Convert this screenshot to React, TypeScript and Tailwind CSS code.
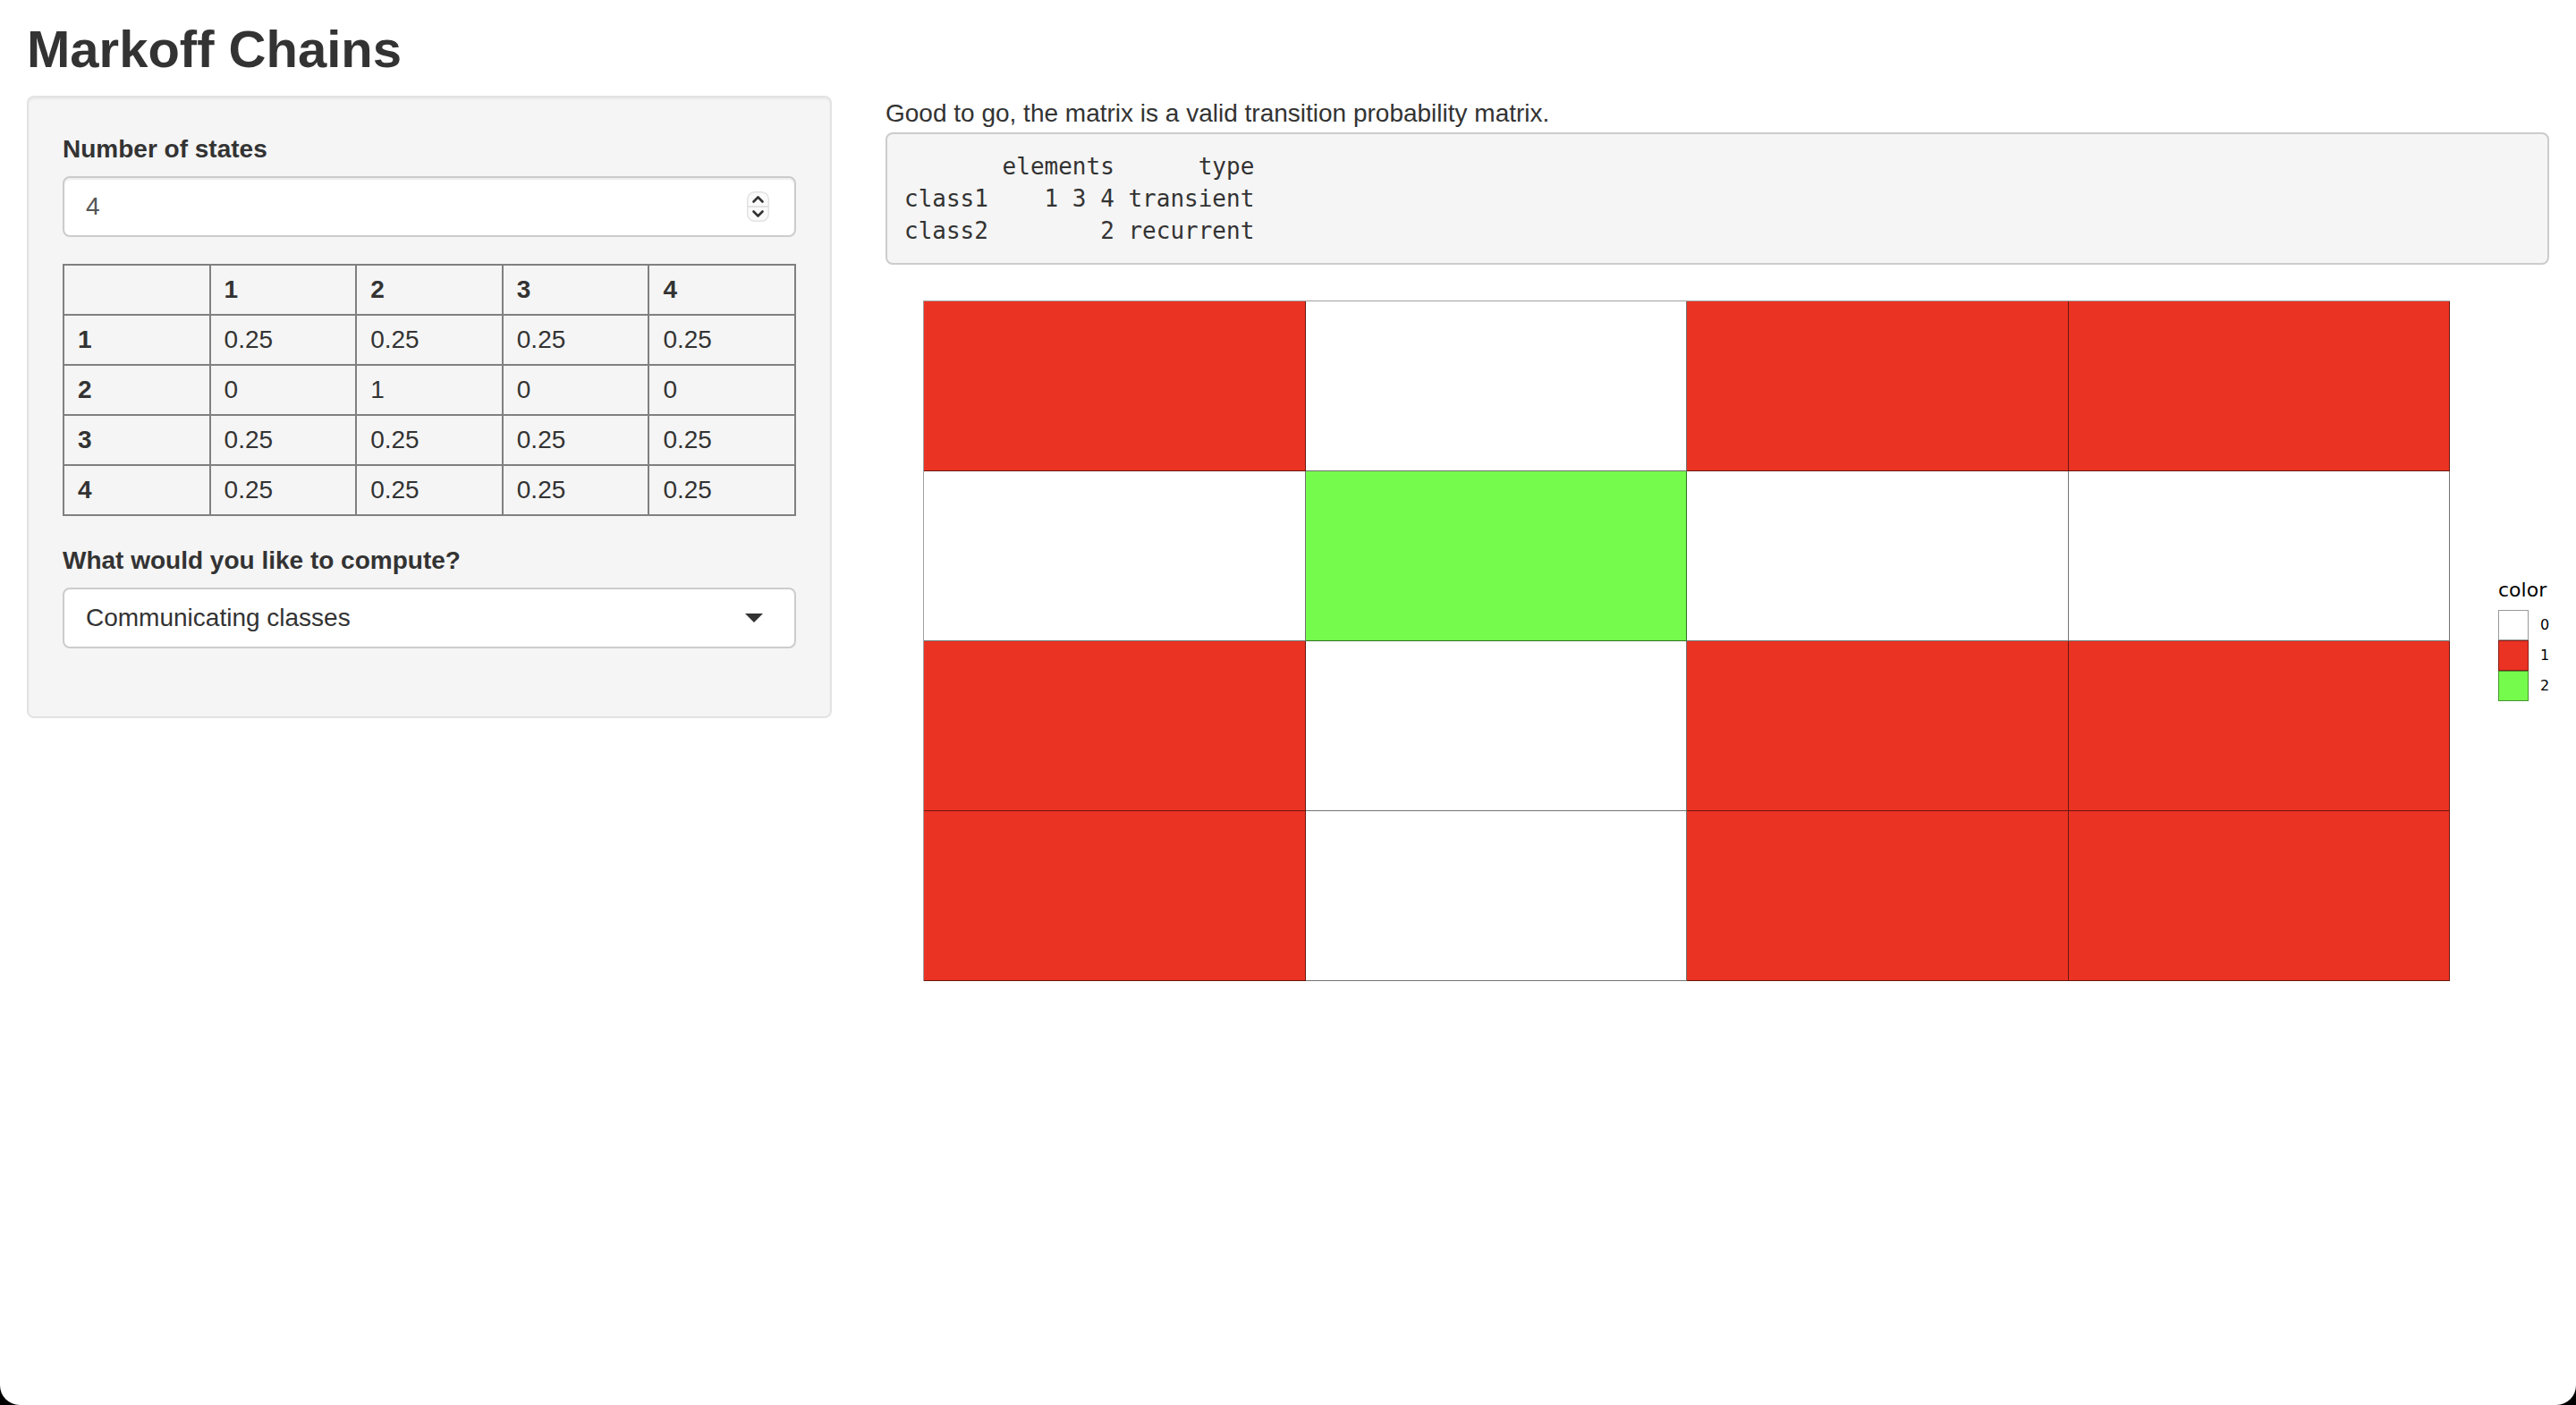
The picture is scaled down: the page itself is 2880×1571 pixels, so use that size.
const SANS = "font-['Liberation_Sans',Arial,sans-serif]";

const matrix = [
  ["0.25", "0.25", "0.25", "0.25"],
  ["0", "1", "0", "0"],
  ["0.25", "0.25", "0.25", "0.25"],
  ["0.25", "0.25", "0.25", "0.25"],
];

// 0 = white, 1 = red, 2 = green
const tiles = [
  [1, 0, 1, 1],
  [0, 2, 0, 0],
  [1, 0, 1, 1],
  [1, 0, 1, 1],
];

const tileColor = ["bg-white", "bg-[#ea3323]", "bg-[#75fb4c]"];

function Spinner() {
  return (
    <svg width="25" height="34" viewBox="0 0 25 34" className="shrink-0">
      <rect x="0.75" y="0.75" width="23.5" height="32.5" rx="8" fill="#fafafa" stroke="#e2e2e2" strokeWidth="1.5" />
      <line x1="1" y1="17" x2="24" y2="17" stroke="#dcdcdc" strokeWidth="1.5" />
      <path d="M7.5 11.5 L12.5 6.5 L17.5 11.5" fill="none" stroke="#333" strokeWidth="2.6" strokeLinecap="round" strokeLinejoin="round" />
      <path d="M7.5 22.5 L12.5 27.5 L17.5 22.5" fill="none" stroke="#333" strokeWidth="2.6" strokeLinecap="round" strokeLinejoin="round" />
    </svg>
  );
}

function Sidebar() {
  return (
    <div className="rounded-[8px] border-2 border-[#e3e3e3] bg-[#f5f5f5] px-[38px] pt-[38px] pb-[76px] shadow-[inset_0_2px_2px_rgba(0,0,0,0.05)]">
      <div className="mb-[10px] text-[28px] font-bold leading-[40px] text-[#333]">Number of states</div>
      <div className="mb-[30px] flex h-[68px] items-center justify-between rounded-[8px] border-2 border-[#ccc] bg-white pl-[24px] pr-[28px] shadow-[inset_0_2px_2px_rgba(0,0,0,0.075)]">
        <span className="text-[28px] leading-[40px] text-[#555]">4</span>
        <Spinner />
      </div>

      <div className="mb-[30px] grid grid-cols-5 border-l-2 border-t-2 border-[#808080] text-[28px] text-[#333]">
        {["", "1", "2", "3", "4"].map((h, i) => (
          <div key={"h" + i} className="flex h-[56px] items-center border-b-2 border-r-2 border-[#808080] pl-[15px] font-bold">
            {h}
          </div>
        ))}
        {matrix.map((row, r) => [
          <div key={"r" + r} className="flex h-[56px] items-center border-b-2 border-r-2 border-[#808080] pl-[15px] font-bold">
            {r + 1}
          </div>,
          ...row.map((v, c) => (
            <div key={r + "-" + c} className="flex h-[56px] items-center border-b-2 border-r-2 border-[#808080] pl-[15px]">
              {v}
            </div>
          )),
        ])}
      </div>

      <div className="mb-[10px] text-[28px] font-bold leading-[40px] text-[#333]">What would you like to compute?</div>
      <div className="flex h-[68px] items-center justify-between rounded-[8px] border-2 border-[#ccc] bg-white pl-[24px] pr-[35px]">
        <span className="text-[28px] leading-[40px] text-[#333]">Communicating classes</span>
        <svg width="20" height="10" viewBox="0 0 20 10">
          <path d="M0 0 H20 L10 10 Z" fill="#333" />
        </svg>
      </div>
    </div>
  );
}

function Heatmap() {
  return (
    <div className="mt-[40px] flex items-center pl-[42px]">
      <div className="grid h-[761px] w-[1707px] grid-cols-4 grid-rows-4 border-l border-t border-[#a0a0a0]">
        {tiles.flat().map((t, i) => (
          <div key={i} className={tileColor[t] + " border-b border-r border-black/55"} />
        ))}
      </div>
      <div className="ml-[54px] flex flex-col font-['DejaVu_Sans',sans-serif] text-black">
        <div className="mb-[11px] text-[22px] leading-[22px]">color</div>
        {[0, 1, 2].map((k) => (
          <div key={k} className="flex items-center">
            <div className={tileColor[k] + " h-[34px] w-[34px] border border-black/40"} />
            <span className="ml-[13px] text-[16px] leading-[16px]">{k}</span>
          </div>
        ))}
      </div>
    </div>
  );
}

export default function App() {
  return (
    <div className="h-[1571px] w-[2880px] bg-black">
      <div className={SANS + " h-full w-full overflow-hidden rounded-b-[22px] bg-white px-[30px] text-[#333]"}>
        <h2 className="mb-[19px] pt-[22px] text-[58px] font-bold leading-[66px] text-[#333]">Markoff Chains</h2>
        <div className="flex">
          <div className="w-[900px] shrink-0">
            <Sidebar />
          </div>
          <div className="ml-[60px] flex-1">
            <p className="text-[28px] leading-[40px]">Good to go, the matrix is a valid transition probability matrix.</p>
            <pre className="mt-px whitespace-pre rounded-[8px] border-2 border-[#ccc] bg-[#f5f5f5] px-[19px] py-[18px] font-['DejaVu_Sans_Mono',monospace] text-[26px] leading-[36px] text-[#333]">
{"       elements      type\nclass1    1 3 4 transient\nclass2        2 recurrent"}
            </pre>
            <Heatmap />
          </div>
        </div>
      </div>
    </div>
  );
}
